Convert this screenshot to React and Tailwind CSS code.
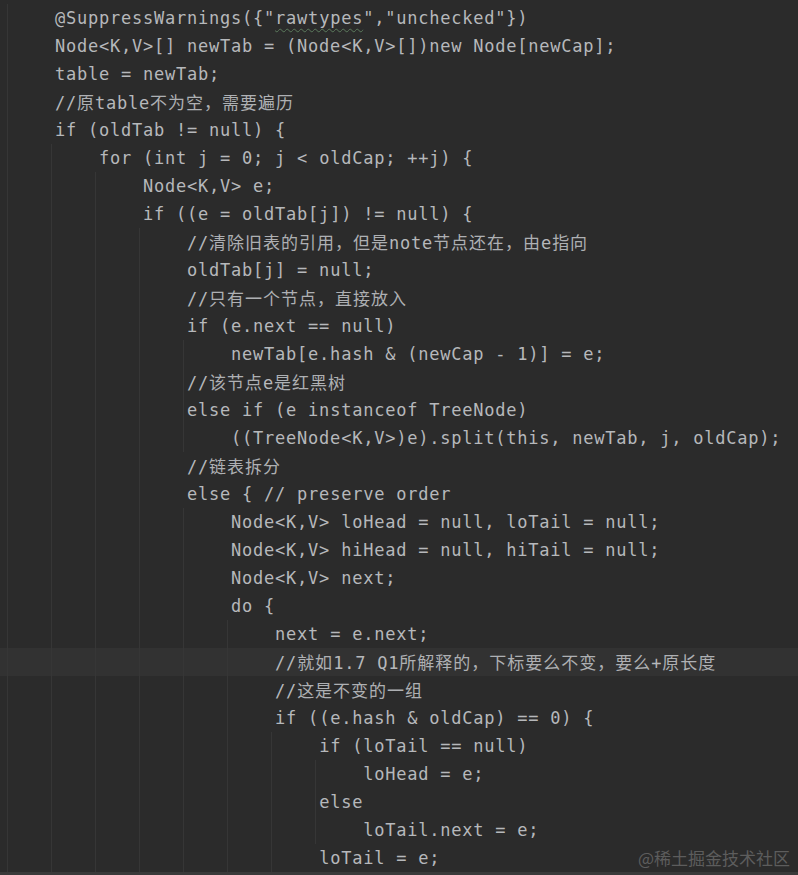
import React from "react";

const LINES = [
  [0, '@SuppressWarnings({"rawtypes","unchecked"})'],
  [0, "Node<K,V>[] newTab = (Node<K,V>[])new Node[newCap];"],
  [0, "table = newTab;"],
  [0, "//原table不为空，需要遍历"],
  [0, "if (oldTab != null) {"],
  [1, "for (int j = 0; j < oldCap; ++j) {"],
  [2, "Node<K,V> e;"],
  [2, "if ((e = oldTab[j]) != null) {"],
  [3, "//清除旧表的引用，但是note节点还在，由e指向"],
  [3, "oldTab[j] = null;"],
  [3, "//只有一个节点，直接放入"],
  [3, "if (e.next == null)"],
  [4, "newTab[e.hash & (newCap - 1)] = e;"],
  [3, "//该节点e是红黑树"],
  [3, "else if (e instanceof TreeNode)"],
  [4, "((TreeNode<K,V>)e).split(this, newTab, j, oldCap);"],
  [3, "//链表拆分"],
  [3, "else { // preserve order"],
  [4, "Node<K,V> loHead = null, loTail = null;"],
  [4, "Node<K,V> hiHead = null, hiTail = null;"],
  [4, "Node<K,V> next;"],
  [4, "do {"],
  [5, "next = e.next;"],
  [5, "//就如1.7 Q1所解释的，下标要么不变，要么+原长度"],
  [5, "//这是不变的一组"],
  [5, "if ((e.hash & oldCap) == 0) {"],
  [6, "if (loTail == null)"],
  [7, "loHead = e;"],
  [6, "else"],
  [7, "loTail.next = e;"],
  [6, "loTail = e;"],
];

const EXTRA_GUIDES = { 13: [183], 14: [183], 28: [315] };

function renderText(text, lineIdx) {
  if (lineIdx === 0) {
    return (
      <>
        {'@SuppressWarnings({"'}
        <span className="underline decoration-wavy decoration-[#5b7a5c] underline-offset-[4px] decoration-1">
          rawtypes
        </span>
        {'","unchecked"})'}
      </>
    );
  }
  const parts = text.split(/([\u3000-\u303f\u4e00-\u9fff\uff00-\uffef]+)/);
  return parts.map((p, i) =>
    i % 2 === 1 ? (
      <span
        key={i}
        className="font-['Noto_Sans_CJK_SC',sans-serif] tracking-[1px] text-[#aeb0b3]"
      >
        {p}
      </span>
    ) : (
      <span key={i}>{p}</span>
    )
  );
}

export default function App() {
  return (
    <div className="relative w-[798px] h-[875px] overflow-hidden bg-[#2b2b2b] flex flex-col">
      <div className="pt-1 flex-1 font-['DejaVu_Sans_Mono','Noto_Sans_CJK_SC',monospace] text-[17px] tracking-[0.77px] text-[#b6b8bb]">
        {LINES.map(([indent, text], idx) => {
          const guides = [7];
          for (let k = 0; k < indent; k++) guides.push(51 + 44 * k);
          (EXTRA_GUIDES[idx] || []).forEach((g) => guides.push(g));
          return (
            <div
              key={idx}
              className={`relative h-7 leading-7 whitespace-pre pl-[55px] ${
                idx === 23 ? "bg-[#323232]" : ""
              }`}
            >
              {guides.map((g) => (
                <span
                  key={g}
                  className="absolute top-0 bottom-0 w-px bg-[#363636]"
                  style={{ left: g }}
                />
              ))}
              {" ".repeat(indent * 4)}
              {renderText(text, idx)}
            </div>
          );
        })}
      </div>
      <div className="h-[3px] bg-[#3a3a3a]" />
      <div className="absolute right-[8px] bottom-[3px] h-[28px] leading-[28px] font-['Noto_Sans_CJK_SC',sans-serif] text-[17px] text-[#5d5d5d]">
        @稀土掘金技术社区
      </div>
    </div>
  );
}
